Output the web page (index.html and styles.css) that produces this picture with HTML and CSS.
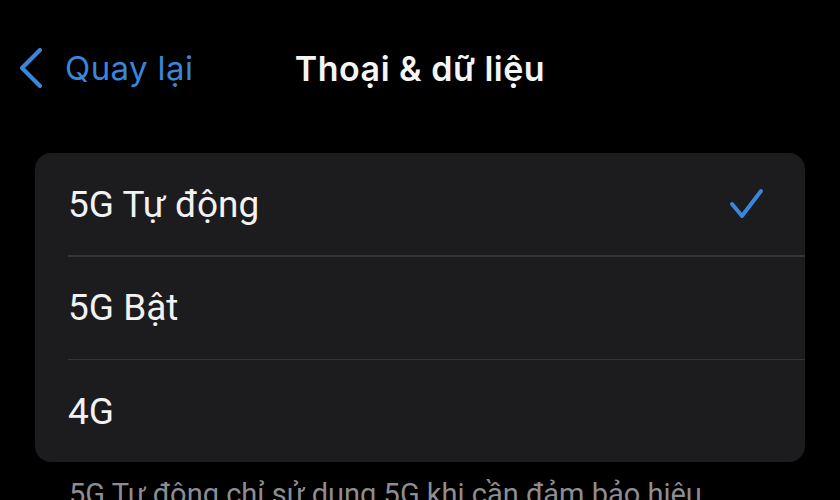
FILE: index.html
```html
<!DOCTYPE html>
<html lang="vi">
<head>
<meta charset="utf-8">
<link rel="stylesheet" href="styles.css">
</head>
<body>
<header class="nav">
  <a class="back">
    <svg class="chev" width="28" height="44" viewBox="0 0 28 44"><path d="M22 4 L4 22 L22 40" fill="none" stroke="currentColor" stroke-width="4.2" stroke-linecap="round" stroke-linejoin="round"/></svg>
    <span>Quay lại</span>
  </a>
  <h1 class="title">Thoại &amp; dữ liệu</h1>
  <div></div>
</header>
<section class="card">
  <div class="row"><span>5G Tự động</span>
    <svg class="check" width="40" height="36" viewBox="0 0 40 36"><path d="M5 18 L15 30 L34 5" fill="none" stroke="currentColor" stroke-width="4" stroke-linecap="round" stroke-linejoin="round"/></svg>
  </div>
  <div class="sep"></div>
  <div class="row"><span>5G Bật</span></div>
  <div class="sep"></div>
  <div class="row"><span>4G</span></div>
</section>
<p class="foot">5G Tự động chỉ sử dụng 5G khi cần đảm bảo hiệu</p>
</body>
</html>
```
FILE: styles.css
```css
html, body { margin: 0; background: #000; }
body {
  font-family: Inter, "Noto Sans", sans-serif;
  color: #f2f2f2;
  width: 840px;
  height: 500px;
  overflow: hidden;
}
.nav {
  height: 136px;
  display: grid;
  grid-template-columns: 1fr auto 1fr;
  align-items: center;
}
.back {
  display: flex;
  align-items: center;
  gap: 19px;
  color: #3a86dc;
  font-size: 33px;
  padding-left: 18px;
  letter-spacing: 0.4px;
}
.chev { display: block; }
.title {
  margin: 0;
  font-size: 34px;
  font-weight: 600;
  color: #f5f5f5;
  letter-spacing: 0.5px;
}
.card {
  margin: 17px 35px 0 35px;
  background: #1c1c1e;
  border-radius: 16px;
  overflow: hidden;
}
.row {
  height: 102px;
  display: flex;
  align-items: center;
  justify-content: space-between;
  padding: 0 38px 0 33px;
  font-family: Roboto, "Noto Sans", sans-serif;
  font-size: 37px;
  letter-spacing: 0;
}
.sep {
  height: 1.5px;
  background: #343436;
  margin-left: 33px;
}
.check { color: #3a86dc; display: block; }
.foot {
  margin: 15px 0 0 69px;
  font-family: Roboto, "Noto Sans", sans-serif;
  font-size: 29px;
  color: #8d8d92;
  white-space: nowrap;
  line-height: 1.2;
}
```
